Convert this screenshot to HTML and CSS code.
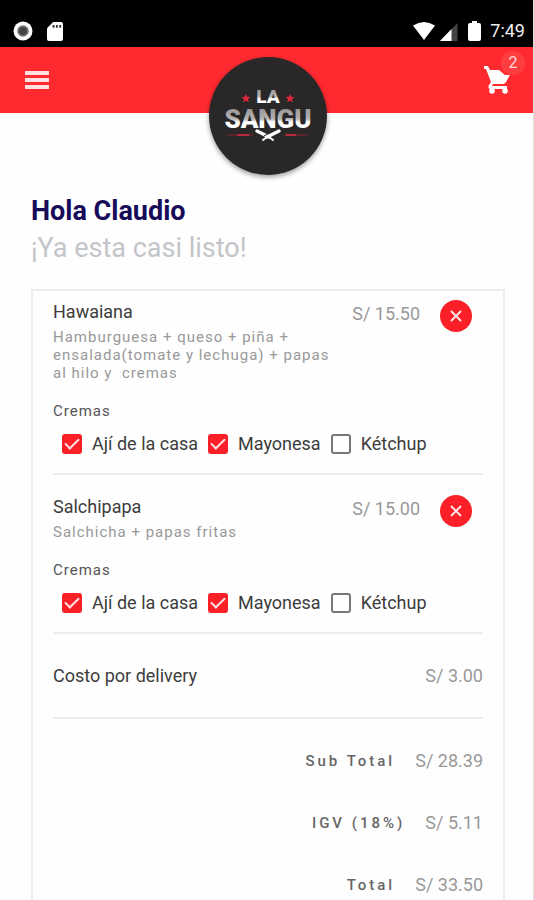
FILE: index.html
```html
<!DOCTYPE html>
<html lang="es">
<head>
<meta charset="utf-8">
<meta name="viewport" content="width=device-width, initial-scale=1">
<title>La Sangu</title>
<link rel="stylesheet" href="styles.css">
</head>
<body>
<div class="status">
  <div class="status-group">
    <svg width="20" height="20" viewBox="0 0 20 20" aria-hidden="true"><circle cx="10" cy="10" r="9.5" fill="#fff"/><circle cx="10" cy="10" r="5.8" fill="#777"/><circle cx="10" cy="10" r="4" fill="#444"/></svg>
    <svg width="16" height="19" viewBox="0 0 17 20" aria-hidden="true"><path d="M6.500 0H15Q17 0 17 2V18Q17 20 15 20H2Q0 20 0 18V6.500Z" fill="#fff"/><path d="M6 3h2v3H6zM9.500 3h2v3h-2zM13 3h2v3h-2z" fill="#333"/></svg>
  </div>
  <div class="status-group status-right">
    <svg width="24" height="20" viewBox="0 0 24 20" aria-hidden="true"><path d="M1 4.500Q12-2.500 23 4.500L12 19Z" fill="#fff"/></svg>
    <svg width="18" height="18" viewBox="0 0 18 18" aria-hidden="true"><path d="M17.500 0V18H0Z" fill="#444"/><path d="M11.500 6V18H0Z" fill="#fff"/></svg>
    <svg class="battery" width="13" height="20" viewBox="0 0 13 20" aria-hidden="true"><path d="M4 0h5v2h2q2 0 2 2v14q0 2-2 2H2q-2 0-2-2V4q0-2 2-2h2z" fill="#fff"/></svg>
    <span class="clock">7:49</span>
  </div>
</div>
<header class="appbar">
  <button class="icon-button" type="button" aria-label="Menú">
    <svg width="24" height="18" viewBox="0 0 24 18"><path d="M0 0h24v4H0zM0 7h24v4H0zM0 14h24v4H0z" fill="#ffe0e0"/></svg>
  </button>
  <div class="logo">
    <svg viewBox="0 0 118 118" role="img" aria-label="La Sangu">
      <defs>
        <linearGradient id="ink" x1="0" y1="0" x2="0" y2="1"><stop offset="0" stop-color="#8d8b8c"/><stop offset=".5" stop-color="#b4b2b3"/><stop offset=".6" stop-color="#fff"/><stop offset="1" stop-color="#fff"/></linearGradient>
      </defs>
      <circle cx="59" cy="59" r="59" fill="#2a2728"/>
      <path id="star" d="M37 37l1.300 2.800 3.100.3-2.300 2.100.6 3-2.700-1.500-2.700 1.500.6-3-2.300-2.100 3.100-.3z" fill="#e0263c"/>
      <use href="#star" x="44"/>
      <text class="logo-text" x="59" y="46" font-size="19">LA</text>
      <text class="logo-text" x="59" y="71" font-size="26">SANGU</text>
      <path d="M18 78h26M75 78h23" stroke="#8f1f2d" stroke-width="1"/>
      <path d="M28 78h12M77 78h10" stroke="#b8283a" stroke-width="2"/>
      <path d="M48 74l12 6M70 74l-12 6" stroke="#fff" stroke-width="3.500" stroke-linecap="round"/>
      <path d="M60 80l4 3M58 80l-4 3" stroke="#fff" stroke-width="2" stroke-linecap="round"/>
      <path d="M55 79l7-4" stroke="#2a2728" stroke-width="1"/>
    </svg>
  </div>
  <button class="icon-button cart" type="button" aria-label="Carrito">
    <svg width="27" height="28" viewBox="0 0 27 28"><path d="M0 0h4l2 4h9l6 5h5l-4 7q-1 2-3 2H9l-1 2h15v3H7q-4 0-2-4l2-3L2 3H0z" fill="#fff"/><circle cx="8" cy="25" r="2.800" fill="#fff"/><circle cx="21" cy="25" r="2.800" fill="#fff"/></svg>
    <span class="badge">2</span>
  </button>
</header>
<main class="page">
  <h1 class="greeting">Hola Claudio</h1>
  <p class="tagline">¡Ya esta casi listo!</p>
  <div class="card">
    <section class="item">
      <div class="item-head">
        <div class="item-info">
          <h2 class="name">Hawaiana</h2>
          <p class="desc">Hamburguesa + queso + piña + ensalada(tomate y lechuga) + papas al hilo y&nbsp; cremas</p>
        </div>
        <span class="price">S/ 15.50</span>
        <button class="remove" type="button" aria-label="Quitar Hawaiana"><svg width="12" height="12" viewBox="0 0 12 12"><path d="M1 1l10 10M11 1L1 11" stroke="#ffe3e3" stroke-width="2"/></svg></button>
      </div>
      <fieldset class="sauces">
        <legend class="legend">Cremas</legend>
        <div class="options">
          <label class="option"><input class="check" type="checkbox" checked>Ají de la casa</label>
          <label class="option"><input class="check" type="checkbox" checked>Mayonesa</label>
          <label class="option"><input class="check" type="checkbox">Kétchup</label>
        </div>
      </fieldset>
    </section>
    <section class="item">
      <div class="item-head">
        <div class="item-info">
          <h2 class="name">Salchipapa</h2>
          <p class="desc">Salchicha + papas fritas</p>
        </div>
        <span class="price">S/ 15.00</span>
        <button class="remove" type="button" aria-label="Quitar Salchipapa"><svg width="12" height="12" viewBox="0 0 12 12"><path d="M1 1l10 10M11 1L1 11" stroke="#ffe3e3" stroke-width="2"/></svg></button>
      </div>
      <fieldset class="sauces">
        <legend class="legend">Cremas</legend>
        <div class="options">
          <label class="option"><input class="check" type="checkbox" checked>Ají de la casa</label>
          <label class="option"><input class="check" type="checkbox" checked>Mayonesa</label>
          <label class="option"><input class="check" type="checkbox">Kétchup</label>
        </div>
      </fieldset>
    </section>
    <div class="delivery"><span class="name">Costo por delivery</span><span class="price">S/ 3.00</span></div>
    <dl class="totals">
      <div class="total"><dt>Sub Total</dt><dd class="price">S/ 28.39</dd></div>
      <div class="total"><dt>IGV (18%)</dt><dd class="price">S/ 5.11</dd></div>
      <div class="total"><dt>Total</dt><dd class="price">S/ 33.50</dd></div>
    </dl>
  </div>
</main>
</body>
</html>
```
FILE: styles.css
```css
* {
  box-sizing: border-box;
}

body {
  margin: 0;
  min-height: 100vh;
  display: flex;
  flex-direction: column;
  background: #fefefe;
  border-right: 1px solid #dedede;
  font-family: Roboto, sans-serif;
  color: #3c3c3c;
}

h1, h2, p, dl, dd {
  margin: 0;
  font-weight: 400;
}

/* Status bar */
.status {
  display: flex;
  justify-content: space-between;
  align-items: flex-end;
  height: 47px;
  padding: 0 9px 6px 13px;
  margin-right: -1px;
  background: #000;
}

.status-group {
  display: flex;
  align-items: flex-end;
  gap: 14px;
}

.status-right {
  gap: 4px;
}

.battery {
  margin: 0 5px 0 6px;
}

.clock {
  color: #eee;
  font-size: 18px;
  line-height: 20px;
}

/* App bar */
.appbar {
  display: grid;
  grid-template-columns: 1fr 118px 1fr;
  grid-template-rows: 66px;
  align-items: center;
  height: 66px;
  padding: 0 23px 0 25px;
  margin-right: -1px;
  background: #ff2a30;
}

.icon-button {
  justify-self: start;
  display: flex;
  padding: 0;
  border: 0;
  background: none;
}

.cart {
  position: relative;
  justify-self: end;
}

.badge {
  position: absolute;
  top: -15px;
  right: -14px;
  width: 24px;
  height: 24px;
  border-radius: 50%;
  background: #ff3e40;
  color: #ffd6d6;
  font: 16px/24px Roboto, sans-serif;
  text-align: center;
}

.logo {
  align-self: start;
  height: 118px;
  margin-top: 10px;
  border-radius: 50%;
  box-shadow: 0 2px 5px #0006;
  z-index: 1;
}

.logo svg {
  display: block;
}

.logo-text {
  fill: url(#ink);
  font-family: Roboto, sans-serif;
  font-weight: 900;
  text-anchor: middle;
}

/* Order */
.page {
  flex: 1;
  display: flex;
  flex-direction: column;
  padding: 80px 28px 0 31px;
}

.greeting {
  color: #160b58;
  font-size: 27px;
  line-height: 36px;
  font-weight: 700;
}

.tagline {
  color: #c3c5c9;
  font-size: 27px;
  line-height: 38px;
}

.card {
  flex: 1;
  margin-top: 22px;
  padding: 0 20px;
  border: 2px solid #ebebeb;
  border-bottom: 0;
}

.item {
  padding: 9px 0 17px;
  border-bottom: 2px solid #ececec;
}

.item + .item {
  padding-top: 20px;
}

.item-head {
  display: flex;
  align-items: flex-start;
  padding-right: 11px;
}

.item-info {
  flex: 1;
}

.name {
  font-size: 18px;
  line-height: 24px;
}

.desc {
  max-width: 284px;
  margin-top: 4px;
  color: #999;
  font-size: 15px;
  line-height: 18px;
  letter-spacing: 1px;
}

.price {
  color: #999;
  font-size: 18px;
  line-height: 28px;
}

.remove {
  display: flex;
  align-items: center;
  justify-content: center;
  width: 32px;
  height: 32px;
  margin-left: 20px;
  padding: 0;
  border: 0;
  border-radius: 50%;
  background: #fb1f27;
}

.sauces {
  margin: 19px 0 0;
  padding: 0;
  border: 0;
}

.legend {
  padding: 0;
  color: #555;
  font-size: 15px;
  line-height: 20px;
  letter-spacing: 1px;
}

.options {
  display: flex;
  gap: 10px;
  padding: 11px 0 0 9px;
}

.option {
  display: flex;
  align-items: center;
  gap: 10px;
  font-size: 18px;
  line-height: 24px;
}

.check {
  appearance: none;
  width: 20px;
  height: 20px;
  margin: 0;
  border: 2px solid #777;
  border-radius: 3px;
}

.check:checked {
  display: grid;
  place-items: center;
  border-color: #fb1f27;
  background: #fb1f27;
}

.check:checked::before {
  content: "";
  width: 12px;
  height: 6px;
  margin-top: -4px;
  border: solid #ffe3e3;
  border-width: 0 0 2px 2px;
  transform: rotate(-45deg);
}

.delivery {
  display: flex;
  justify-content: space-between;
  align-items: center;
  height: 85px;
  border-bottom: 2px solid #ececec;
}

.totals {
  padding-top: 28px;
}

.total {
  display: flex;
  justify-content: flex-end;
  align-items: center;
  gap: 20px;
  height: 28px;
}

.total + .total {
  margin-top: 34px;
}

.total dt {
  color: #666;
  font-size: 15px;
  font-weight: 500;
  letter-spacing: 3px;
}
```
